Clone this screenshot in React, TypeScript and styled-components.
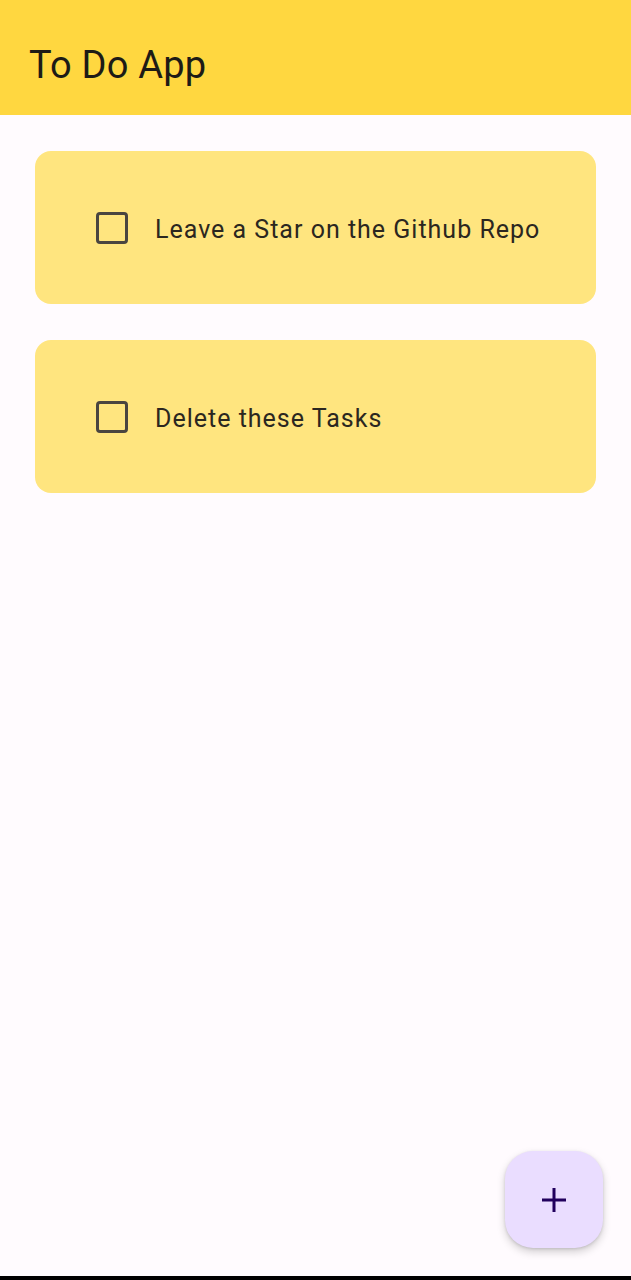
import styled, { createGlobalStyle } from 'styled-components';

const GlobalStyle = createGlobalStyle`
  html, body {
    margin: 0;
    padding: 0;
    background: #fffbfe;
    font-family: Roboto, "Noto Sans", sans-serif;
  }
`;

const Page = styled.div`
  position: relative;
  width: 631px;
  height: 1280px;
  display: flex;
  flex-direction: column;
  background: #fffbfe;
  overflow: hidden;
`;

const AppBar = styled.header`
  height: 115px;
  flex-shrink: 0;
  background: #ffd740;
  display: flex;
  align-items: center;
  padding: 14px 29px 0;
  box-sizing: border-box;
`;

const Title = styled.h1`
  margin: 0;
  font-size: 38px;
  font-weight: 400;
  color: #1d1b16;
  letter-spacing: 0.2px;
`;

const TaskList = styled.ul`
  list-style: none;
  margin: 0;
  padding: 36px 35px 0;
  display: flex;
  flex-direction: column;
  gap: 36px;
  flex: 1;
`;

const TaskCard = styled.li`
  height: 153px;
  background: #ffe57f;
  border-radius: 16px;
  display: flex;
  align-items: center;
  padding-left: 61px;
  box-sizing: border-box;
`;

const CheckBox = styled.span<{ $done: boolean }>`
  width: 32px;
  height: 32px;
  box-sizing: border-box;
  border: 3px solid #4a4540;
  border-radius: 4px;
  background: ${({ $done }) => ($done ? '#4a4540' : 'transparent')};
  margin-right: 27px;
  flex-shrink: 0;
`;

const TaskName = styled.span`
  font-size: 25px;
  letter-spacing: 1px;
  color: #2b2720;
  padding-top: 3px;
`;

const Fab = styled.button`
  position: absolute;
  right: 28px;
  bottom: 32px;
  width: 98px;
  height: 97px;
  border: none;
  border-radius: 28px;
  background: #eaddff;
  box-shadow: 0 4px 8px rgba(0, 0, 0, 0.18), 0 1px 3px rgba(0, 0, 0, 0.12);
  display: flex;
  align-items: center;
  justify-content: center;
  padding: 0;
`;

const NavLine = styled.div`
  height: 4px;
  background: #000;
  flex-shrink: 0;
`;

const tasks = [
  { id: 1, name: 'Leave a Star on the Github Repo', done: false },
  { id: 2, name: 'Delete these Tasks', done: false },
];

function App() {
  return (
    <Page>
      <GlobalStyle />
      <AppBar>
        <Title>To Do App</Title>
      </AppBar>
      <TaskList>
        {tasks.map((task) => (
          <TaskCard key={task.id}>
            <CheckBox $done={task.done} />
            <TaskName>{task.name}</TaskName>
          </TaskCard>
        ))}
      </TaskList>
      <Fab aria-label="Add task">
        <svg width="28" height="28" viewBox="0 0 28 28">
          <path d="M14 2v24M2 14h24" stroke="#21005d" strokeWidth="3" />
        </svg>
      </Fab>
      <NavLine />
    </Page>
  );
}

export default App;
